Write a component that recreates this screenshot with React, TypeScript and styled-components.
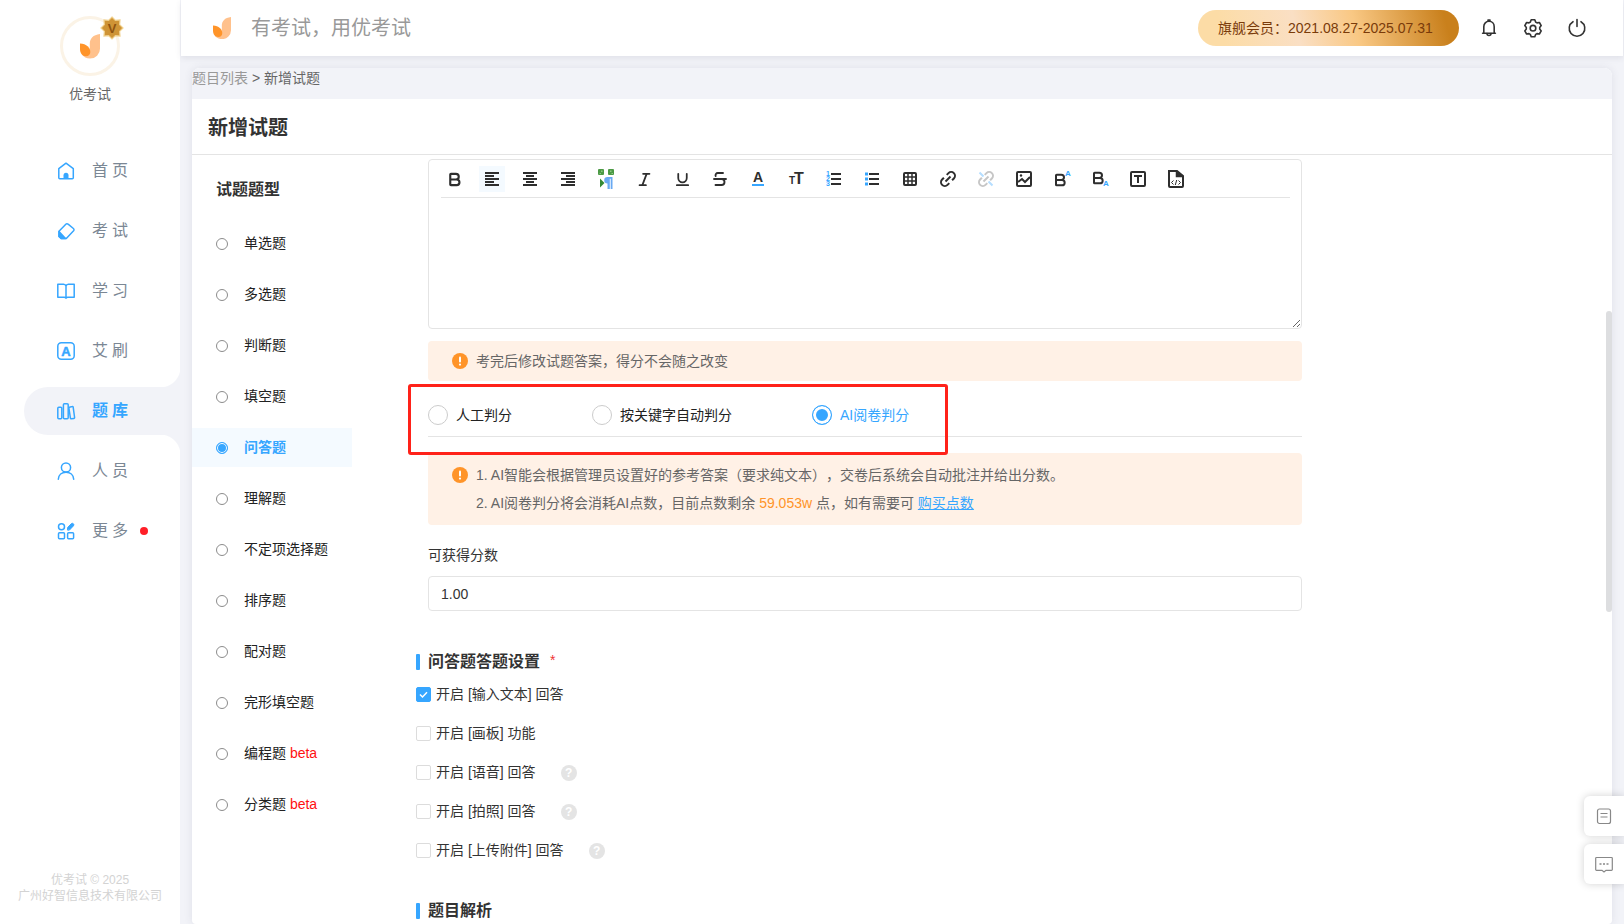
import React from "react";
import styled, { createGlobalStyle, css } from "styled-components";
import { Bold, Italic, Underline, Strikethrough } from "lucide-react";

const blue = "#36a6ff";
const orange = "#ff9429";
const pageGrey = "#f2f3f8";
const lineGrey = "#e4e4e4";
const family = `"Liberation Sans", "Noto Sans CJK SC", sans-serif`;

const GlobalStyle = createGlobalStyle`
  *, *::before, *::after { box-sizing: border-box; }
  body { margin: 0; background: ${pageGrey}; font-family: ${family}; font-size: 14px; color: #333; text-spacing-trim: space-all; }
  button, input, textarea { font: inherit; color: inherit; margin: 0; }
  button { border: 0; padding: 0; background: none; cursor: pointer; }
  ul { list-style: none; margin: 0; padding: 0; }
  h1, h2, p { margin: 0; }
  a { color: inherit; text-decoration: none; }
  svg { display: block; flex: none; }
`;

const Page = styled.div`
  display: flex;
  height: 100vh;
  overflow: hidden;
`;

/* ---------- sidebar ---------- */

const Sidebar = styled.aside`
  display: flex;
  flex-direction: column;
  flex: none;
  width: 180px;
  background: #fff;
`;

const Account = styled.div`
  display: flex;
  flex-direction: column;
  align-items: center;
  gap: 8px;
  padding-top: 16px;
  line-height: 20px;
  color: #666;
`;

const Avatar = styled.div`
  position: relative;
  display: grid;
  place-items: center;
  width: 60px;
  height: 60px;
  border: 3px solid #fbf3e6;
  border-radius: 50%;
`;

const Crown = styled.svg`
  position: absolute;
  top: -3px;
  right: -7px;
`;

const Menu = styled.ul`
  display: flex;
  flex-direction: column;
  gap: 12px;
  padding: 43px 0 0 24px;
`;

const MenuLink = styled.a<{ $active?: boolean }>`
  position: relative;
  display: flex;
  align-items: center;
  gap: 16px;
  height: 48px;
  padding-left: 32px;
  border-radius: 24px 0 0 24px;
  font-size: 16px;
  line-height: 22px;
  letter-spacing: 4px;
  color: #7b8794;
  ${(p) =>
    p.$active &&
    css`
      background: ${pageGrey};
      color: ${blue};
      font-weight: bold;
      &::before,
      &::after {
        content: "";
        position: absolute;
        right: 0;
        width: 20px;
        height: 20px;
      }
      &::before {
        bottom: 100%;
        background: radial-gradient(circle at 0 0, transparent 20px, ${pageGrey} 21px);
      }
      &::after {
        top: 100%;
        background: radial-gradient(circle at 0 100%, transparent 20px, ${pageGrey} 21px);
      }
    `}
`;

const Dot = styled.i`
  width: 8px;
  height: 8px;
  margin-left: -8px;
  border-radius: 50%;
  background: #ff1f28;
`;

const Copyright = styled.footer`
  margin-top: auto;
  padding-bottom: 20px;
  font-size: 12px;
  line-height: 16px;
  text-align: center;
  color: #d3d3d3;
`;

/* ---------- header ---------- */

const Main = styled.div`
  display: flex;
  flex-direction: column;
  flex: 1;
  min-width: 0;
`;

const Header = styled.header`
  display: flex;
  align-items: center;
  flex: none;
  height: 56px;
  margin: 0 1px;
  padding: 0 36px 0 32px;
  background: #fff;
  box-shadow: 0 2px 6px rgba(60, 60, 90, 0.1);
`;

const Slogan = styled.span`
  flex: 1;
  margin-left: 20px;
  font-size: 20px;
  line-height: 28px;
  color: #999;
`;

const Membership = styled.span`
  width: 261px;
  padding-left: 20px;
  border-radius: 18px;
  line-height: 36px;
  color: #7a3b0a;
  background: linear-gradient(75deg, #fcdca6 10%, #fadfc4 38%, #f9c884 60%, #c9801c 94%);
`;

const HeaderTools = styled.div`
  display: flex;
  gap: 24px;
  margin-left: 20px;
`;

const HeaderButton = styled.button`
  width: 20px;
  height: 20px;
  color: #333;
`;

/* ---------- panel ---------- */

const Panel = styled.main`
  position: relative;
  display: flex;
  flex-direction: column;
  flex: 1;
  min-height: 0;
  margin: 12px 12px 0;
  border-radius: 8px 8px 4px 4px;
  background: #fff;
  box-shadow: 0 0 8px rgba(60, 60, 90, 0.1);
  overflow: clip;
  overflow-clip-margin: 8px;
`;

const Breadcrumb = styled.nav`
  flex: none;
  height: 31px;
  border-radius: 8px 8px 0 0;
  line-height: 20px;
  color: #666;
  background: ${pageGrey};
  a { color: #999; }
`;

const TitleBar = styled.h1`
  flex: none;
  height: 56px;
  padding: 2px 0 0 16px;
  border-bottom: 1px solid ${lineGrey};
  font-size: 20px;
  line-height: 54px;
`;

const Columns = styled.div`
  display: flex;
  flex: 1;
  min-height: 0;
  overflow: hidden;
`;

const TypeColumn = styled.section`
  flex: none;
  width: 160px;
  padding-top: 23px;
`;

const TypeHeading = styled.h2`
  padding-left: 24px;
  font-size: 16px;
  line-height: 24px;
  font-weight: 700;
`;

const TypeList = styled.div`
  display: flex;
  flex-direction: column;
  gap: 12px;
  margin-top: 22px;
`;

const TypeLabel = styled.label<{ $active?: boolean }>`
  display: flex;
  align-items: center;
  gap: 16px;
  height: 39px;
  padding-left: 24px;
  line-height: 19px;
  white-space: nowrap;
  color: ${(p) => (p.$active ? blue : "#222")};
  font-weight: ${(p) => (p.$active ? "bold" : "normal")};
  background: ${(p) => (p.$active ? "#f4faff" : "transparent")};
`;

const Radio = styled.input<{ $size: number; $line: string }>`
  appearance: none;
  flex: none;
  width: ${(p) => p.$size}px;
  height: ${(p) => p.$size}px;
  border: 1px solid ${(p) => p.$line};
  border-radius: 50%;
  background: #fff;
  &:checked {
    border-color: ${blue};
    background: ${blue};
    box-shadow: inset 0 0 0 ${(p) => (p.$size > 12 ? 3 : 1)}px #fff;
  }
`;

const Beta = styled.span`
  color: #f11;
`;

const Form = styled.form`
  flex: 1;
  min-width: 0;
  padding: 4px 310px 0 64px;
`;

const Block = styled.div`
  padding-left: 12px;
`;

const Editor = styled.div`
  display: flex;
  flex-direction: column;
  height: 170px;
  border: 1px solid ${lineGrey};
  border-radius: 4px;
`;

const Toolbar = styled.div`
  display: flex;
  gap: 12px;
  margin: 0 11px 0 12px;
  padding: 6px 0 5px;
  border-bottom: 1px solid ${lineGrey};
`;

const ToolButton = styled.button<{ $active?: boolean }>`
  display: grid;
  place-items: center;
  width: 26px;
  height: 26px;
  color: #2e2e2e;
  background: ${(p) => (p.$active ? "#f4faff" : "none")};
`;

const EditorText = styled.textarea`
  flex: 1;
  width: 100%;
  padding: 8px 12px;
  border: 0;
  outline: 0;
  background: none;
  resize: vertical;
`;

const Notice = styled.div<{ $top: number; $pad: number }>`
  display: flex;
  gap: 8px;
  margin-top: ${(p) => p.$top}px;
  padding: ${(p) => p.$pad}px 24px;
  border-radius: 4px;
  line-height: 28px;
  color: #666;
  background: #fff1e6;
  svg { margin-top: 6px; }
`;

const Points = styled.span`
  color: ${orange};
`;

const BuyLink = styled.a`
  color: ${blue};
  text-decoration: underline;
`;

const Scoring = styled.div`
  position: relative;
  display: flex;
  gap: 80px;
  padding: 24px 0 11px;
  border-bottom: 1px solid ${lineGrey};
`;

const ScoringLabel = styled.label<{ $active?: boolean }>`
  display: flex;
  align-items: center;
  gap: 8px;
  line-height: 20px;
  white-space: nowrap;
  color: ${(p) => (p.$active ? blue : "#222")};
`;

const Highlight = styled.span`
  position: absolute;
  z-index: 1;
  top: 3px;
  left: -20px;
  width: 540px;
  height: 71px;
  border: 3px solid #ff2219;
  border-radius: 3px;
  pointer-events: none;
`;

const FieldLabel = styled.label`
  display: block;
  margin: 20px 0 11px;
  line-height: 20px;
`;

const TextInput = styled.input`
  display: block;
  width: 100%;
  height: 35px;
  padding: 0 12px;
  border: 1px solid ${lineGrey};
  border-radius: 4px;
  outline: 0;
`;

const SectionHeading = styled.h2<{ $top: number }>`
  display: flex;
  align-items: center;
  gap: 8px;
  margin-top: ${(p) => p.$top}px;
  font-size: 16px;
  line-height: 24px;
  font-weight: 700;
  &::before {
    content: "";
    width: 4px;
    height: 16px;
    border-radius: 1px;
    background: ${blue};
  }
`;

const Required = styled.span`
  align-self: flex-start;
  margin-left: 2px;
  font-size: 14px;
  line-height: 20px;
  font-weight: normal;
  color: #e33;
`;

const OptionList = styled.ul`
  padding-top: 1px;
`;

const OptionRow = styled.li`
  display: flex;
  align-items: center;
  gap: 25px;
  height: 39px;
`;

const OptionLabel = styled.label`
  display: flex;
  align-items: center;
  gap: 5px;
  line-height: 17px;
`;

const Tick = styled.span`
  position: relative;
  display: block;
  width: 15px;
  height: 15px;
  svg { position: absolute; inset: 0; pointer-events: none; }
`;

const Checkbox = styled.input`
  appearance: none;
  display: block;
  width: 15px;
  height: 15px;
  border: 1px solid #dcdcdc;
  border-radius: 2px;
  &:checked { border-color: ${blue}; background: ${blue}; }
`;

const Help = styled.button`
  width: 16px;
  height: 16px;
  border-radius: 50%;
  font-size: 12px;
  line-height: 16px;
  font-weight: bold;
  color: #fff;
  background: #e4e4e4;
`;

const ScrollThumb = styled.div`
  position: absolute;
  top: 243px;
  right: 0;
  width: 6px;
  height: 301px;
  border-radius: 3px;
  background: #dddee0;
`;

const Floating = styled.div`
  position: fixed;
  right: 0;
  bottom: 40px;
  display: flex;
  flex-direction: column;
  gap: 8px;
`;

const FloatButton = styled.button`
  display: grid;
  place-items: center;
  width: 40px;
  height: 40px;
  border-radius: 6px 0 0 6px;
  color: #888;
  background: #fff;
  box-shadow: 0 0 8px rgba(0, 0, 0, 0.18);
`;

/* ---------- drawings ---------- */

const Logo = ({ width }: { width: number }) => (
  <svg width={width} height={width * 1.25} viewBox="0 0 20 25" aria-hidden="true">
    <path d="M20 0v14.500A10 10 0 0 1 10 24.600C6.500 24.600 3.500 23 1.800 20.200L9.800 17V10C9.800 4.500 13 .8 20 0z" fill="#ffc18c" />
    <path d="M0 9.500C6.500 9.800 10.300 13.500 10.300 18c0 2.600-1.700 4.200-4.300 4.200C2 22.200 0 19 0 15z" fill={orange} />
  </svg>
);

const Badge = () => (
  <Crown width="24" height="24" viewBox="0 0 24 24" aria-hidden="true">
    <path d="M12 1l3.400 3.400 4.600-.4-.4 4.600L23 12l-3.400 3.400.4 4.600-4.600-.4L12 23l-3.400-3.400-4.600.4.400-4.600L1 12l3.400-3.400L4 4l4.600.4z" fill="#cf9436" stroke="#f0d08c" strokeWidth="1.200" />
    <text x="12" y="16.500" textAnchor="middle" fontSize="13" fontWeight="bold" fill="#8f5410" fontFamily="Liberation Sans">V</text>
  </Crown>
);

const MenuIcon = ({ children }: { children: React.ReactNode }) => (
  <svg width="20" height="20" viewBox="0 0 20 20" fill="none" stroke={blue} strokeWidth="1.500" strokeLinecap="round" strokeLinejoin="round" aria-hidden="true">
    {children}
  </svg>
);

const menu = [
  { name: "首页", icon: <><path d="M2.800 7.700L10 2.200l7.300 5.500v9.100a1 1 0 0 1-1 1H3.800a1 1 0 0 1-1-1z" /><path d="M7.500 17.800v-3.600a2.500 2.500 0 0 1 5 0v3.600z" fill={blue} stroke="none" /></> },
  { name: "考试", icon: <><path d="M3 10.200l6.800-7a1.600 1.600 0 0 1 2.300 0l5.300 4.300a1.600 1.600 0 0 1 .2 2.300l-7.300 7.700H5.200L3 15.500z" /><path d="M3 10.500l6.500 7H5.200L3 15.500z" fill={blue} /></> },
  { name: "学习", icon: <path d="M1.800 3.200h5.700a2.500 2.500 0 0 1 2.500 2v12a2 2 0 0 0-2-1H1.800zM18.200 3.200h-5.700a2.500 2.500 0 0 0-2.500 2v12a2 2 0 0 1 2-1h6.200z" /> },
  { name: "艾刷", icon: <><rect x="1.800" y="1.800" width="16.400" height="16.400" rx="3.500" /><text x="10" y="14.800" textAnchor="middle" fontSize="13" fontWeight="bold" fill={blue} stroke={blue} strokeWidth=".5" letterSpacing="0" fontFamily="Liberation Sans">A</text></> },
  { name: "题库", active: true, icon: <><rect x="1.800" y="6.200" width="4" height="11.600" rx="1" /><rect x="7.400" y="2.800" width="4.800" height="15" rx="1" /><path d="M13.400 6.200l2.800-.6a.8.8 0 0 1 1 .7l1.400 10.200a.8.800 0 0 1-.7.9l-2.600.4a.8.800 0 0 1-.9-.7L12.900 7z" /></> },
  { name: "人员", icon: <><circle cx="10" cy="6.500" r="4.600" /><path d="M2.300 18.200C2.600 14 5.800 11.200 10 11.200s7.400 2.800 7.700 7" /></> },
  { name: "更多", dot: true, icon: <><circle cx="5.500" cy="5.800" r="3" /><rect x="2.500" y="11.800" width="6" height="6" rx="1" /><rect x="11.600" y="11.800" width="6" height="6" rx="1" /><path d="M11.600 8.800V6.500l3.600-3.700a1.500 1.500 0 0 1 2.200 2.100L13.700 8.800z" fill={blue} strokeWidth="1" /></> },
];

const ToolIcon = ({ children }: { children: React.ReactNode }) => (
  <svg width="26" height="26" viewBox="0 0 26 26" fill="none" stroke="currentColor" strokeWidth="2" aria-hidden="true">
    {children}
  </svg>
);

const Letter = ({ x, y, size, color = "currentColor", children }: { x: number; y: number; size: number; color?: string; children: string }) => (
  <text x={x} y={y} fontSize={size} fontWeight="bold" fill={color} stroke="none" textAnchor="middle" fontFamily="Liberation Sans">
    {children}
  </text>
);

const chain = (
  <>
    <g transform="rotate(-45 13 13)">
      <path d="M11 9.200H8.500a3.800 3.800 0 0 0 0 7.600H11M15 9.200h2.500a3.800 3.800 0 0 1 0 7.600H15" />
    </g>
    <path d="M10.500 15.500l5-5" />
  </>
);

const tools: { name: string; active?: boolean; icon: React.ReactNode }[] = [
  { name: "加粗", icon: <Bold size={17} strokeWidth={3} /> },
  { name: "左对齐", active: true, icon: <ToolIcon><path d="M6 7h14M6 10h9M6 13h14M6 16h9M6 19h14" /></ToolIcon> },
  { name: "居中", icon: <ToolIcon><path d="M6 7h14M9 10h8M6 13h14M9 16h8M6 19h14" /></ToolIcon> },
  { name: "右对齐", icon: <ToolIcon><path d="M6 7h14M11 10h9M6 13h14M11 16h9M6 19h14" /></ToolIcon> },
  {
    name: "段落",
    icon: (
      <ToolIcon>
        <g stroke="none">
          <rect x="5" y="3" width="6" height="6" rx="1" fill="#4c9a45" />
          <rect x="15" y="3" width="6" height="6" rx="1" fill="#4c9a45" />
          <path d="M8 4.500h1.500V6H8zM6.500 7H8v1H6.500zM17 4.500h1.500V6H17zM18.500 7H20v1h-1.500z" fill="#8cc584" />
          <path d="M7 12.500l4.500 4.500L7 21.500z" fill="#358a35" />
          <path d="M19.500 11h-5a3.300 3.300 0 0 0 0 6.600V23h2.300V12.800h.9V23h1.800z" fill="#69a9f2" />
        </g>
      </ToolIcon>
    ),
  },
  { name: "斜体", icon: <Italic size={17} strokeWidth={2.500} /> },
  { name: "下划线", icon: <Underline size={17} strokeWidth={2.500} /> },
  { name: "删除线", icon: <Strikethrough size={18} strokeWidth={2.500} /> },
  { name: "文字颜色", icon: <ToolIcon><Letter x={13} y={16} size={14}>A</Letter><path d="M7 19h12" stroke={blue} /></ToolIcon> },
  { name: "字号", icon: <ToolIcon><Letter x={9} y={18} size={10}>T</Letter><Letter x={16} y={18} size={16}>T</Letter></ToolIcon> },
  {
    name: "有序列表",
    icon: (
      <ToolIcon>
        <path d="M10 8h10M10 13h10M10 18h10" />
        <Letter x={7} y={10} size={7} color={blue}>1</Letter>
        <Letter x={7} y={15} size={7} color={blue}>2</Letter>
        <Letter x={7} y={20} size={7} color={blue}>3</Letter>
      </ToolIcon>
    ),
  },
  { name: "无序列表", icon: <ToolIcon><path d="M10 8h10M10 13h10M10 18h10" /><path d="M6 8h3M6 13h3M6 18h3" stroke={blue} strokeWidth="3" /></ToolIcon> },
  { name: "表格", icon: <ToolIcon><rect x="7" y="7" width="12" height="12" rx="1" /><path d="M11 7v12M15 7v12M7 11h12M7 15h12" strokeWidth="1.500" /></ToolIcon> },
  { name: "插入链接", icon: <ToolIcon>{chain}</ToolIcon> },
  { name: "取消链接", icon: <ToolIcon><g stroke="#c6c6c6">{chain}</g><path d="M6.500 6.500l4 4M15.500 15.500l4 4" stroke="#b5deff" /></ToolIcon> },
  { name: "图片", icon: <ToolIcon><rect x="6" y="6" width="14" height="14" rx="1" /><path d="M7 16l4-3 3 3 5-5" /><circle cx="10" cy="9.500" r="1.200" fill="currentColor" stroke="none" /></ToolIcon> },
  { name: "上标", icon: <ToolIcon><Bold x={3} y={6} width={16} height={16} strokeWidth={3} /><Letter x={19} y={10} size={8} color={blue}>A</Letter></ToolIcon> },
  { name: "下标", icon: <ToolIcon><Bold x={3} y={4} width={16} height={16} strokeWidth={3} /><Letter x={19} y={20} size={8} color={blue}>A</Letter></ToolIcon> },
  { name: "文本框", icon: <ToolIcon><rect x="6" y="6" width="14" height="14" rx="1" /><path d="M9 10h8M13 10v7" /></ToolIcon> },
  { name: "源代码", icon: <ToolIcon><path d="M6 5h8l6 5v10a1 1 0 0 1-1 1H7a1 1 0 0 1-1-1z" /><path d="M13.500 5v5.500H20" fill="currentColor" strokeWidth="1.500" /><path d="M10.500 14.500L8.500 16.500l2 2M15.500 14.500l2 2-2 2M13.700 14l-1.400 5" strokeWidth="1" /></ToolIcon> },
];

const WarnIcon = () => (
  <svg width="16" height="16" viewBox="0 0 16 16" aria-hidden="true">
    <circle cx="8" cy="8" r="8" fill={orange} />
    <rect x="7" y="3.500" width="2" height="6" rx="1" fill="#fff" />
    <circle cx="8" cy="11.600" r="1.100" fill="#fff" />
  </svg>
);

const HeaderIcon = ({ children }: { children: React.ReactNode }) => (
  <svg width="20" height="20" viewBox="0 0 20 20" fill="none" stroke="currentColor" strokeWidth="1.600" strokeLinecap="round" strokeLinejoin="round" aria-hidden="true">
    {children}
  </svg>
);

const headerTools = [
  { name: "通知", icon: <><path d="M3.600 15.200h12.800M4.800 15V8.700C4.800 5.700 7 3.300 10 3.300s5.200 2.400 5.200 5.400V15M9 2.800V2h2v.8" /><path d="M8 15.500a2 2 0 0 0 4 0" /></> },
  { name: "设置", icon: <><path d="M8.200 1.800h3.600l.9 2.300 1.300.8 2.400-.4 1.800 3.100-1.500 1.900v1.500l1.500 1.900-1.800 3.100-2.400-.4-1.300.8-.9 2.300H8.200l-.9-2.300-1.300-.8-2.400.4-1.800-3.100L3.300 11V9.500L1.800 7.600l1.800-3.100 2.400.4 1.300-.8z" /><circle cx="10" cy="10.200" r="2.800" /></> },
  { name: "退出", icon: <path d="M10 1.500v7M6 3.700a7.800 7.800 0 1 0 8 0" /> },
];

const types = ["单选题", "多选题", "判断题", "填空题", "问答题", "理解题", "不定项选择题", "排序题", "配对题", "完形填空题", "编程题", "分类题"];
const betaTypes = ["编程题", "分类题"];
const scoring = ["人工判分", "按关键字自动判分", "AI阅卷判分"];
const options = [
  { name: "开启 [输入文本] 回答", checked: true },
  { name: "开启 [画板] 功能" },
  { name: "开启 [语音] 回答", help: true },
  { name: "开启 [拍照] 回答", help: true },
  { name: "开启 [上传附件] 回答", help: true },
];

export default function App() {
  return (
    <Page>
      <GlobalStyle />
      <Sidebar>
        <Account>
          <Avatar>
            <Logo width={20} />
            <Badge />
          </Avatar>
          优考试
        </Account>
        <Menu>
          {menu.map((m) => (
            <li key={m.name}>
              <MenuLink href="#" $active={m.active}>
                <MenuIcon>{m.icon}</MenuIcon>
                {m.name}
                {m.dot && <Dot />}
              </MenuLink>
            </li>
          ))}
        </Menu>
        <Copyright>
          <p>优考试 © 2025</p>
          <p>广州好智信息技术有限公司</p>
        </Copyright>
      </Sidebar>

      <Main>
        <Header>
          <Logo width={18} />
          <Slogan>有考试，用优考试</Slogan>
          <Membership>旗舰会员：2021.08.27-2025.07.31</Membership>
          <HeaderTools>
            {headerTools.map((t) => (
              <HeaderButton key={t.name} type="button" aria-label={t.name}>
                <HeaderIcon>{t.icon}</HeaderIcon>
              </HeaderButton>
            ))}
          </HeaderTools>
        </Header>

        <Panel>
          <Breadcrumb>
            <a href="#">题目列表</a> &gt; 新增试题
          </Breadcrumb>
          <TitleBar>新增试题</TitleBar>
          <Columns>
            <TypeColumn>
              <TypeHeading>试题题型</TypeHeading>
              <TypeList>
                {types.map((t) => (
                  <TypeLabel key={t} $active={t === "问答题"}>
                    <Radio type="radio" name="type" defaultChecked={t === "问答题"} $size={12} $line="#8c8c8c" />
                    <span>
                      {t}
                      {betaTypes.includes(t) && <Beta> beta</Beta>}
                    </span>
                  </TypeLabel>
                ))}
              </TypeList>
            </TypeColumn>

            <Form>
              <Block>
                <Editor>
                  <Toolbar>
                    {tools.map((t) => (
                      <ToolButton key={t.name} type="button" aria-label={t.name} $active={t.active}>
                        {t.icon}
                      </ToolButton>
                    ))}
                  </Toolbar>
                  <EditorText aria-label="参考答案" />
                </Editor>
                <Notice $top={12} $pad={6}>
                  <WarnIcon />
                  <p>考完后修改试题答案，得分不会随之改变</p>
                </Notice>
                <Scoring>
                  {scoring.map((s, i) => (
                    <ScoringLabel key={s} $active={i === 2}>
                      <Radio type="radio" name="scoring" defaultChecked={i === 2} $size={20} $line="#ccc" />
                      {s}
                    </ScoringLabel>
                  ))}
                  <Highlight />
                </Scoring>
                <Notice $top={16} $pad={8}>
                  <WarnIcon />
                  <div>
                    <p>1. AI智能会根据管理员设置好的参考答案（要求纯文本），交卷后系统会自动批注并给出分数。</p>
                    <p>
                      2. AI阅卷判分将会消耗AI点数，目前点数剩余 <Points>59.053w</Points> 点，如有需要可{" "}
                      <BuyLink href="#">购买点数</BuyLink>
                    </p>
                  </div>
                </Notice>
                <FieldLabel htmlFor="score">可获得分数</FieldLabel>
                <TextInput id="score" type="text" defaultValue="1.00" />
              </Block>

              <SectionHeading $top={39}>
                问答题答题设置 <Required>*</Required>
              </SectionHeading>
              <OptionList>
                {options.map((o) => (
                  <OptionRow key={o.name}>
                    <OptionLabel>
                      <Tick>
                        <Checkbox type="checkbox" defaultChecked={o.checked} />
                        {o.checked && (
                          <svg width="15" height="15" viewBox="0 0 15 15" fill="none" stroke="#fff" strokeWidth="1.500" aria-hidden="true">
                            <path d="M4 7.500l2.500 2.500L11 5.300" />
                          </svg>
                        )}
                      </Tick>
                      {o.name}
                    </OptionLabel>
                    {o.help && <Help type="button">?</Help>}
                  </OptionRow>
                ))}
              </OptionList>
              <SectionHeading $top={29}>题目解析</SectionHeading>
            </Form>
          </Columns>
          <ScrollThumb />
        </Panel>
      </Main>

      <Floating>
        <FloatButton type="button" aria-label="文档">
          <svg width="20" height="20" viewBox="0 0 20 20" fill="none" stroke="currentColor" strokeWidth="1.200" aria-hidden="true">
            <rect x="3.500" y="3" width="13" height="14.500" rx="2" />
            <path d="M6.500 7.500h7M6.500 11h7" />
          </svg>
        </FloatButton>
        <FloatButton type="button" aria-label="留言">
          <svg width="20" height="20" viewBox="0 0 20 20" fill="none" stroke="currentColor" strokeWidth="1.200" aria-hidden="true">
            <path d="M2.500 3.500h15a.8.800 0 0 1 .8.800v11.200a.8.800 0 0 1-.8.800h-5.500l-2 1.700-2-1.700H2.500a.8.800 0 0 1-.8-.8V4.300a.8.800 0 0 1 .8-.8z" />
            <path d="M5.500 10h2M9 10h2M12.500 10h2" strokeWidth="1.500" />
          </svg>
        </FloatButton>
      </Floating>
    </Page>
  );
}
